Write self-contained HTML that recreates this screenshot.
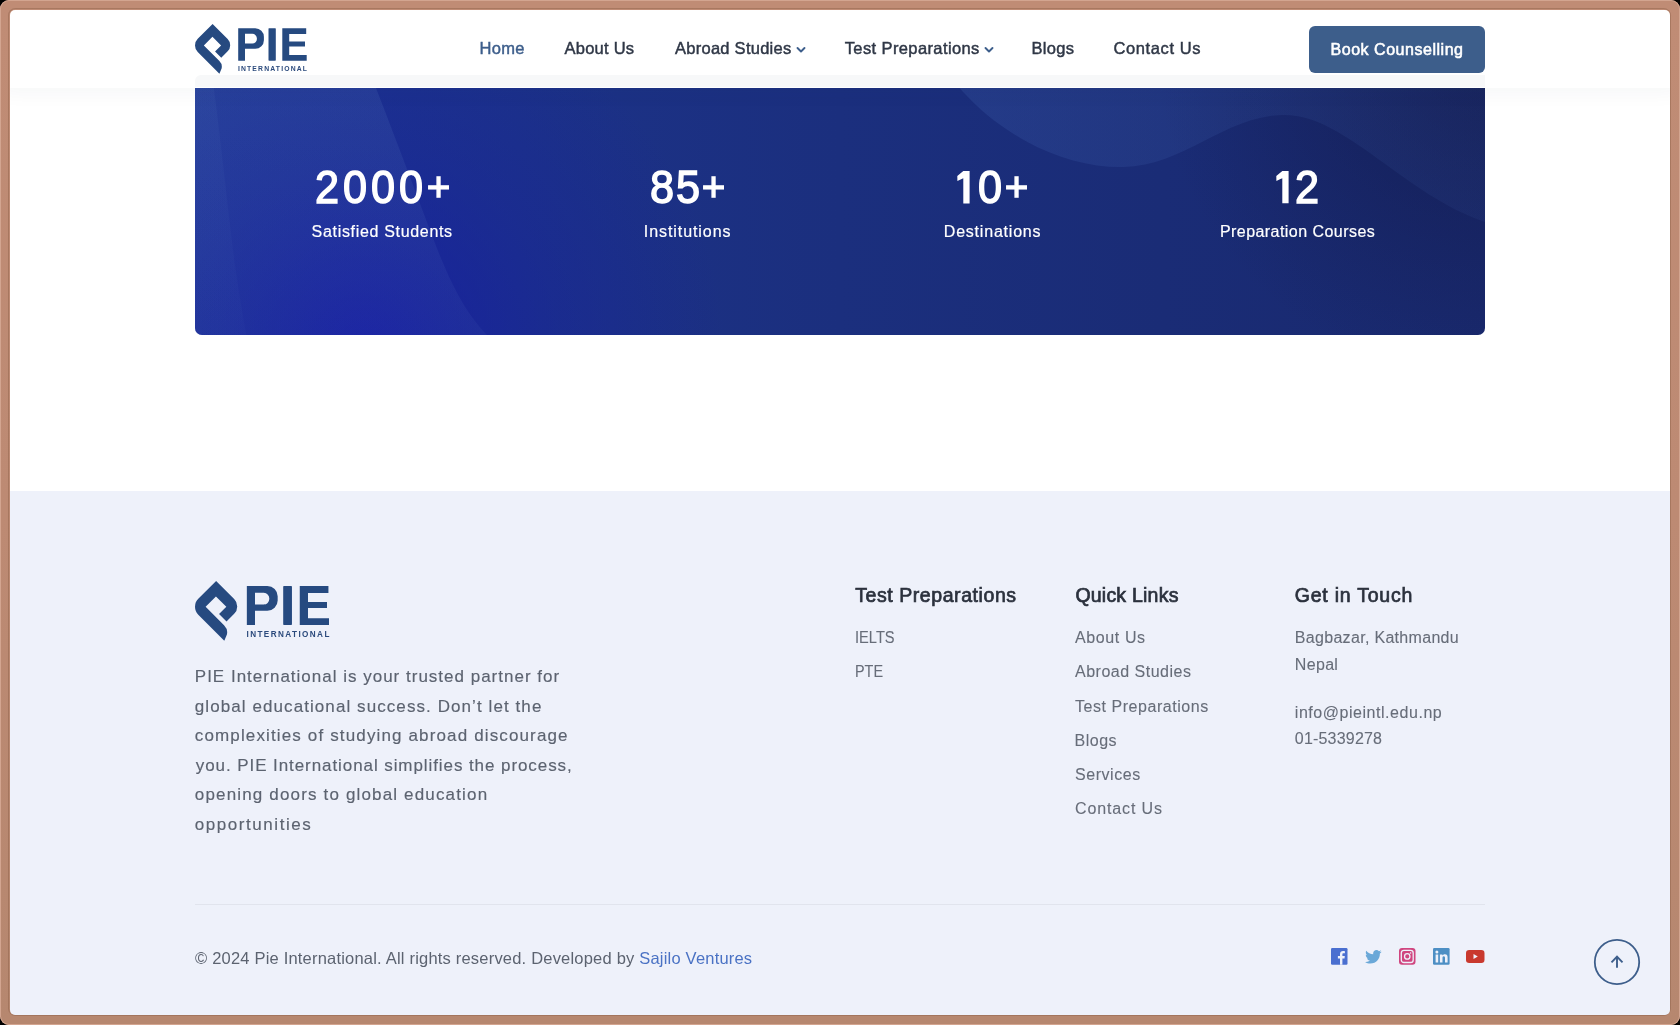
<!DOCTYPE html>
<html><head><meta charset="utf-8">
<style>
html,body{margin:0;padding:0;width:1680px;height:1025px;overflow:hidden;background:#000;}
body{font-family:"Liberation Sans",sans-serif;position:relative;}
#frame{position:absolute;left:0;top:0;width:1680px;height:1025px;border-radius:9px;background:linear-gradient(#c08c75,#bd8a73 50%,#b6876f);box-shadow:inset 0 0 0 1px #d3a590;overflow:hidden;}
#c{position:absolute;left:0;top:0;width:1680px;height:1025px;background:#fff;will-change:transform;clip-path:inset(10px 10px 10px 10px round 5px);}
.t{position:absolute;line-height:1;white-space:nowrap;}
#hdr{position:absolute;left:0;top:0;width:1680px;height:88px;background:#fff;box-shadow:0 4px 20px rgba(30,40,60,0.045);}
#hband{position:absolute;left:195px;top:74.6px;width:1290px;height:12px;background:#f7f8f9;border-radius:6px 0 0 0;}
.nav{font-size:16.5px;color:#2f3746;-webkit-text-stroke:0.45px #2f3746;top:39.5px;}
#btn{position:absolute;left:1309px;top:25.5px;width:176px;height:47px;border-radius:6px;background:#3d5e8b;}
#banner{position:absolute;left:195px;top:50px;width:1290px;height:285px;border-radius:7px;overflow:hidden;}
.num{font-size:47px;font-weight:400;color:#fff;-webkit-text-stroke:1.5px #fff;}
.lab{font-size:16px;color:#fff;-webkit-text-stroke:0.2px #fff;}
#footer{position:absolute;left:0;top:491px;width:1680px;height:534px;background:#eef1fa;}
.pl{font-size:17px;color:#5c6370;-webkit-text-stroke:0.15px #5c6370;}
.hd{font-size:19.5px;font-weight:400;color:#2b313d;-webkit-text-stroke:0.7px #2b313d;}
.lk{font-size:16px;color:#676d79;-webkit-text-stroke:0.1px #676d79;}
.soc{position:absolute;}
</style></head>
<body>
<svg width="0" height="0" style="position:absolute">
  <defs>
    <symbol id="logo" viewBox="0 0 113 50">
      <path fill="#264a80" d="M17.6,0 L32.65,15.05 A8.7,8.7 0 0 1 32.65,27.35 L26.25,33.75 L20.05,27.55 L26.1,21.5 L17.45,12.85 L8.85,21.45 L24.2,36.8 Q27.6,40.2 26.6,44.5 L24.4,49.7 L2.73,28.03 A9.3,9.3 0 0 1 2.73,14.87 Z"/>
      <path fill="#264a80" fill-rule="evenodd" d="M43.2,4.2 H60.3 A8.6,8.6 0 0 1 68.9,12.8 V16.2 A8.6,8.6 0 0 1 60.3,24.8 H50 V36.7 H43.2 Z M50,9.8 V19.6 H57.3 A4.6,4.6 0 0 0 61.9,15 V14.4 A4.6,4.6 0 0 0 57.3,9.8 Z"/>
      <rect fill="#264a80" x="73.5" y="4.2" width="7.3" height="32.5" rx="0.6"/>
      <path fill="#264a80" d="M87.3,4.2 H111.2 V10.1 H94.2 V17.5 H110 V22.6 H94.2 V31.1 H111.7 V36.7 H87.3 Z"/>
      <text x="42.9" y="46.9" font-family="Liberation Sans" font-weight="700" font-size="6.8" fill="#2b4a7c" textLength="69.1" lengthAdjust="spacing">INTERNATIONAL</text>
    </symbol>
  </defs>
</svg>
<div id="frame">
<div style="position:absolute;left:8.5px;top:8.5px;width:1661px;height:1006px;border-radius:6.5px;box-shadow:0 0 0 1px rgba(140,95,70,0.45);"></div>
<div id="c">
  <div id="banner">
    <svg width="1290" height="285" viewBox="0 0 1290 285" style="position:absolute;left:0;top:0">
      <defs>
        <linearGradient id="bg" gradientUnits="userSpaceOnUse" x1="0" y1="0" x2="1290" y2="0">
          <stop offset="0" stop-color="#1d3592"/>
          <stop offset="0.5" stop-color="#1b2f7e"/>
          <stop offset="1" stop-color="#19296e"/>
        </linearGradient>
        <radialGradient id="bl" gradientUnits="userSpaceOnUse" cx="170" cy="300" r="360">
          <stop offset="0" stop-color="#1519a6" stop-opacity="0.8"/>
          <stop offset="0.55" stop-color="#171fa0" stop-opacity="0.32"/>
          <stop offset="1" stop-color="#171fa0" stop-opacity="0"/>
        </radialGradient>
        <radialGradient id="tr" gradientUnits="userSpaceOnUse" cx="1290" cy="0" r="330">
          <stop offset="0" stop-color="#111848" stop-opacity="0.7"/>
          <stop offset="1" stop-color="#131b4c" stop-opacity="0"/>
        </radialGradient>
        <linearGradient id="lw" x1="0" y1="0" x2="0" y2="1">
          <stop offset="0" stop-color="#8fc0e4" stop-opacity="0.1"/>
          <stop offset="1" stop-color="#8fb4e4" stop-opacity="0.05"/>
        </linearGradient>
        <linearGradient id="lw2" x1="0" y1="0" x2="0" y2="1">
          <stop offset="0" stop-color="#8fc0e4" stop-opacity="0.05"/>
          <stop offset="1" stop-color="#8fc0e4" stop-opacity="0.02"/>
        </linearGradient>
        <linearGradient id="rw" x1="0" y1="0" x2="1" y2="0">
          <stop offset="0" stop-color="#5f8ede" stop-opacity="0.14"/>
          <stop offset="1" stop-color="#5f8ede" stop-opacity="0.06"/>
        </linearGradient>
      </defs>
      <rect width="1290" height="285" fill="url(#bg)"/>
      <rect width="1290" height="285" fill="url(#bl)"/>
      <rect width="1290" height="285" fill="url(#tr)"/>
      <path d="M0,0 H166 C190,60 220,140 238,188 C256,235 270,262 292,285 H0 Z" fill="url(#lw)"/>
      <path d="M0,0 H14 C22,60 30,130 35,175 C40,220 46,255 51.3,285 H0 Z" fill="url(#lw2)"/>
      <path d="M738,0 C778,72 858,118 928,117 C990,116 1030,65 1090,65 C1150,65 1210,145 1290,172 V0 Z" fill="url(#rw)"/>
    </svg>
  </div>
  <div class="t num" style="left:313.7px;top:162.6px;transform:scale(0.92,1);transform-origin:13px 26px">2</div><div class="t num" style="left:342px;top:162.6px;transform:scale(0.92,1);transform-origin:13px 26px">0</div><div class="t num" style="left:369.85px;top:162.6px;transform:scale(0.92,1);transform-origin:13px 26px">0</div><div class="t num" style="left:398.2px;top:162.6px;transform:scale(0.92,1);transform-origin:13px 26px">0</div><div class="t num" style="left:425.05px;top:162.6px;transform:scale(0.86,0.86);transform-origin:13px 26px">+</div><div class="t num" style="left:648.7px;top:162.6px;transform:scale(0.92,1);transform-origin:13px 26px">8</div><div class="t num" style="left:675.3px;top:162.6px;transform:scale(0.92,1);transform-origin:13px 26px">5</div><div class="t num" style="left:700px;top:162.6px;transform:scale(0.86,0.86);transform-origin:13px 26px">+</div><div class="t num" style="left:976.65px;top:162.6px;transform:scale(0.92,1);transform-origin:13px 26px">0</div><div class="t num" style="left:1002.6px;top:162.6px;transform:scale(0.86,0.86);transform-origin:13px 26px">+</div><div class="t num" style="left:1294.25px;top:162.6px;transform:scale(0.92,1);transform-origin:13px 26px">2</div>
  <svg style="position:absolute;left:957.3px;top:170.7px" width="14" height="33"><path d="M0.3,4.9 L6.3,0 H12.6 V32.4 H6.3 V7.2 L0.4,10 Z" fill="#fff"/></svg>
  <svg style="position:absolute;left:1276.2px;top:170.7px" width="14" height="33"><path d="M0.3,4.9 L6.3,0 H12.6 V32.2 H6.3 V7.2 L0.4,10 Z" fill="#fff"/></svg>
  <div class="t lab" style="left:311.6px;top:223.9px;letter-spacing:0.68px">Satisfied Students</div>
  <div class="t lab" style="left:643.8px;top:223.9px;letter-spacing:0.93px">Institutions</div>
  <div class="t lab" style="left:943.8px;top:223.9px;letter-spacing:0.79px">Destinations</div>
  <div class="t lab" style="left:1219.9px;top:223.9px;letter-spacing:0.45px">Preparation Courses</div>

  <div id="hdr"></div>
  <div id="hband"></div>
  <svg style="position:absolute;left:195px;top:24px" width="113" height="50"><use href="#logo"/></svg>
  <div class="t nav" style="left:479.4px;color:#3d5e8b;-webkit-text-stroke:0.45px #3d5e8b;letter-spacing:0.33px">Home</div>
  <div class="t nav" style="left:564.5px;letter-spacing:0.24px">About Us</div>
  <div class="t nav" style="left:675px;letter-spacing:0.26px">Abroad Studies</div>
  <svg style="position:absolute;left:796px;top:45.8px" width="10" height="8"><path d="M1.5,2 L5,5.5 L8.5,2" fill="none" stroke="#3d5e8b" stroke-width="1.9" stroke-linecap="round" stroke-linejoin="round"/></svg>
  <div class="t nav" style="left:844.7px;letter-spacing:0.39px">Test Preparations</div>
  <svg style="position:absolute;left:984px;top:45.8px" width="10" height="8"><path d="M1.5,2 L5,5.5 L8.5,2" fill="none" stroke="#3d5e8b" stroke-width="1.9" stroke-linecap="round" stroke-linejoin="round"/></svg>
  <div class="t nav" style="left:1031.5px;letter-spacing:0.3px">Blogs</div>
  <div class="t nav" style="left:1113.4px;letter-spacing:0.62px">Contact Us</div>
  <div id="btn"></div>
  <div class="t" style="left:1330.5px;top:41.5px;font-size:16px;font-weight:400;color:#fff;-webkit-text-stroke:0.55px #fff;letter-spacing:0.53px">Book Counselling</div>

  <div id="footer"></div>
  <svg style="position:absolute;left:195px;top:581px" width="135.6" height="60" viewBox="0 0 113 50"><use href="#logo"/></svg>
  <div class="t pl" style="left:194.8px;top:667.9px;letter-spacing:1.0px">PIE International is your trusted partner for</div>
  <div class="t pl" style="left:194.8px;top:697.5px;letter-spacing:1.08px">global educational success. Don’t let the</div>
  <div class="t pl" style="left:194.8px;top:727.1px;letter-spacing:1.14px">complexities of studying abroad discourage</div>
  <div class="t pl" style="left:195.8px;top:756.7px;letter-spacing:0.92px">you. PIE International simplifies the process,</div>
  <div class="t pl" style="left:194.8px;top:786.3px;letter-spacing:1.16px">opening doors to global education</div>
  <div class="t pl" style="left:194.8px;top:815.9px;letter-spacing:1.55px">opportunities</div>
  
  <div class="t hd" style="left:855.2px;top:586px;letter-spacing:0.57px">Test Preparations</div>
  <div class="t hd" style="left:1075.4px;top:586px;letter-spacing:0.22px">Quick Links</div>
  <div class="t hd" style="left:1294.8px;top:586px;letter-spacing:0.76px">Get in Touch</div>
  <div class="t lk" style="left:855px;top:630.1px;transform:scaleX(0.915);transform-origin:0 0">IELTS</div>
  <div class="t lk" style="left:855px;top:663.9px;transform:scaleX(0.9);transform-origin:0 0">PTE</div>
  <div class="t lk" style="left:1075px;top:630.1px;letter-spacing:0.61px">About Us</div>
  <div class="t lk" style="left:1075px;top:664.3px;letter-spacing:0.5px">Abroad Studies</div>
  <div class="t lk" style="left:1075px;top:698.6px;letter-spacing:0.54px">Test Preparations</div>
  <div class="t lk" style="left:1074.5px;top:732.8px;letter-spacing:0.5px">Blogs</div>
  <div class="t lk" style="left:1075px;top:767.1px;letter-spacing:0.54px">Services</div>
  <div class="t lk" style="left:1075px;top:801.3px;letter-spacing:0.87px">Contact Us</div>
  <div class="t lk" style="left:1294.8px;top:630.0px;letter-spacing:0.31px">Bagbazar, Kathmandu</div>
  <div class="t lk" style="left:1294.8px;top:656.9px;letter-spacing:0.33px">Nepal</div>
  <div class="t lk" style="left:1294.8px;top:704.6px;letter-spacing:0.54px">info@pieintl.edu.np</div>
  <div class="t lk" style="left:1294.8px;top:731.4px;letter-spacing:0.2px">01-5339278</div>
  <div style="position:absolute;left:195px;top:904px;width:1290px;height:1px;background:#e1e4ed"></div>
  <div class="t" style="left:195px;top:950.3px;font-size:16.5px;color:#5c6370;letter-spacing:0.2px">© 2024 Pie International. All rights reserved. Developed by <span style="color:#4a72c4">Sajilo Ventures</span></div>

  <!-- social -->
  <svg class="soc" style="left:1330.7px;top:948px" width="17" height="17" viewBox="0 0 17 17"><rect x="0" y="0" width="16.5" height="16.8" rx="1.2" fill="#4a6fd0"/><path d="M11.4,16.8 V10.4 H13.5 L13.8,8 H11.4 V6.5 C11.4,5.8 11.6,5.3 12.6,5.3 H13.9 V3.2 C13.6,3.15 12.9,3.1 12.1,3.1 C10.2,3.1 9,4.2 9,6.3 V8 H6.9 V10.4 H9 V16.8 Z" fill="#eef1fa"/></svg>
  <svg class="soc" style="left:1364.5px;top:949.5px" width="17" height="14" viewBox="0 0 24 20"><path fill="#6aa8d8" d="M23.6,2.4 C22.7,2.8 21.8,3 20.8,3.2 C21.8,2.6 22.6,1.6 22.9,0.5 C22,1.1 21,1.5 19.8,1.7 C18.9,0.7 17.7,0.1 16.3,0.1 C13.6,0.1 11.5,2.3 11.5,4.9 C11.5,5.3 11.5,5.6 11.6,6 C7.6,5.8 4.1,3.9 1.7,1 C1.3,1.7 1,2.6 1,3.5 C1,5.2 1.9,6.7 3.2,7.5 C2.4,7.5 1.7,7.3 1,6.9 V7 C1,9.3 2.7,11.3 4.9,11.7 C4.5,11.8 4.1,11.9 3.6,11.9 C3.3,11.9 3,11.9 2.7,11.8 C3.3,13.7 5.1,15.1 7.2,15.1 C5.5,16.4 3.5,17.2 1.2,17.2 C0.8,17.2 0.4,17.2 0,17.1 C2.1,18.5 4.7,19.3 7.4,19.3 C16.3,19.3 21.1,12 21.1,5.6 V5 C22.1,4.3 22.9,3.4 23.6,2.4 Z"/></svg>
  <svg class="soc" style="left:1398.8px;top:948px" width="17" height="17" viewBox="0 0 17 17"><rect x="0" y="0" width="16.5" height="16.8" rx="3" fill="#d0457f"/><rect x="2.3" y="2.3" width="11.9" height="12.2" rx="2.6" fill="none" stroke="#eef1fa" stroke-width="1.3"/><circle cx="8.25" cy="8.4" r="2.7" fill="none" stroke="#eef1fa" stroke-width="1.3"/><circle cx="11.6" cy="5" r="0.75" fill="#eef1fa"/></svg>
  <svg class="soc" style="left:1432.7px;top:948px" width="17" height="17" viewBox="0 0 17 17"><rect x="0" y="0" width="16.6" height="16.8" rx="1.2" fill="#4d8fc4"/><rect x="2.6" y="6.5" width="2.6" height="8" fill="#eef1fa"/><circle cx="3.9" cy="3.9" r="1.5" fill="#eef1fa"/><path d="M6.9,6.5 H9.4 V7.6 C9.8,6.9 10.7,6.3 11.9,6.3 C14.2,6.3 14.6,7.8 14.6,9.8 V14.5 H12 V10.3 C12,9.3 12,8.3 10.8,8.3 C9.6,8.3 9.5,9.2 9.5,10.2 V14.5 H6.9 Z" fill="#eef1fa"/></svg>
  <svg class="soc" style="left:1465.8px;top:950px" width="19" height="13.5" viewBox="0 0 19 13.5"><rect x="0" y="0" width="18.5" height="13" rx="3.2" fill="#c9392e"/><path d="M7.5,4 L11.8,6.5 L7.5,9 Z" fill="#eef1fa"/></svg>

  <!-- scroll top -->
  <svg style="position:absolute;left:1593px;top:938px" width="48" height="48" viewBox="0 0 48 48"><circle cx="24" cy="24" r="22.2" fill="none" stroke="#3d5e8b" stroke-width="1.8"/><path d="M24,29.7 V18.5 M18.5,24.3 L24,18.6 L29.5,24.3" fill="none" stroke="#3d5e8b" stroke-width="1.9" stroke-linecap="butt" stroke-linejoin="miter"/></svg>
</div>
</div>
</body></html>
